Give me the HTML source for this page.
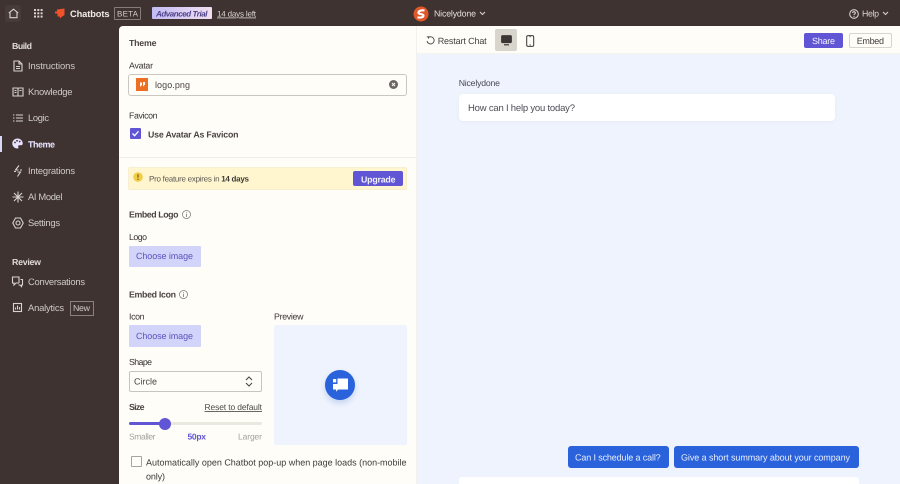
<!DOCTYPE html>
<html><head><meta charset="utf-8"><style>
html,body{margin:0;padding:0;width:900px;height:484px;overflow:hidden;background:#3e3331}
*{box-sizing:border-box}
body{font-family:"Liberation Sans",sans-serif;position:relative}
.a{position:absolute}
svg{position:absolute;overflow:visible}
.s{fill:none;stroke:#d8d3cd;stroke-width:1.1}
#tx{left:0;top:0;z-index:5;text-rendering:geometricPrecision}
#tx text{font-family:"Liberation Sans",sans-serif;font-size:9px;fill:#3a3433}
.n{fill:#cfcac4 !important;font-size:9.400px !important}
.b{font-weight:700}
.l{font-size:8.800px !important}
#tx .h{fill:#4a4342;font-size:8.800px}
</style></head><body>
<!-- top bar -->
<div class="a" style="left:5px;top:5px;width:16px;height:17px;background:#463b39;border-radius:3px"></div>
<svg style="left:8px;top:8px" width="11" height="11" viewBox="0 0 11 11"><path class="s" d="M.8 5L5.500 1.200 10.200 5M2 4.300V9.700H9V4.300"/></svg>
<svg style="left:34px;top:9px" width="9" height="9" viewBox="0 0 9 9" fill="#d8d3cd"><rect x="0" y="0" width="2" height="2"/><rect x="3.300" y="0" width="2" height="2"/><rect x="6.600" y="0" width="2" height="2"/><rect x="0" y="3.300" width="2" height="2"/><rect x="3.300" y="3.300" width="2" height="2"/><rect x="6.600" y="3.300" width="2" height="2"/><rect x="0" y="6.600" width="2" height="2"/><rect x="3.300" y="6.600" width="2" height="2"/><rect x="6.600" y="6.600" width="2" height="2"/></svg>
<svg style="left:54px;top:8px" width="11" height="11" viewBox="0 0 11 11" fill="#f0522a"><path d="M3 1.500L10.500 .5V7L7.500 9 6.500 10.500 5.500 8.500H3.500V5.500H1V3.500H3Z"/></svg>
<div class="a" style="left:114px;top:7px;width:27px;height:13px;border:1px solid #857b77;border-radius:1px"></div>
<div class="a" style="left:152px;top:7px;width:60px;height:12px;background:linear-gradient(90deg,#c3bcf5,#f1dff0);border-radius:1px"></div>
<svg style="left:413px;top:5.500px" width="16" height="16" viewBox="0 0 16 16"><circle cx="8" cy="8" r="7.500" fill="#e0572a"/><path d="M11.500 4.500C8.500 3.800 5 5 5.500 7 6 8.500 10.500 7.800 10.500 9.500 10.500 11.500 7 12 4.500 11.300" fill="none" stroke="#fff" stroke-width="2.100"/></svg>
<svg style="left:479px;top:11px" width="7" height="5" viewBox="0 0 7 5"><path class="s" d="M1 1L3.500 3.500 6 1" stroke-width=".8"/></svg>
<svg style="left:849px;top:8.500px" width="10" height="10" viewBox="0 0 10 10"><circle class="s" cx="5" cy="5" r="4.300"/><path class="s" d="M3.600 4C3.700 2.300 6.500 2.300 6.400 4 6.300 5 5 5 5 6"/><circle cx="5" cy="7.400" r=".6" fill="#d8d3cd"/></svg>
<svg style="left:882px;top:11px" width="7" height="5" viewBox="0 0 7 5"><path class="s" d="M1 1L3.500 3.500 6 1" stroke-width=".8"/></svg>

<!-- sidebar icons -->
<svg style="left:13px;top:60px" width="10" height="12" viewBox="0 0 10 12"><path class="s" d="M1 1H6L9 4V11H1ZM6 1V4H9M3 6.500H7M3 8.500H7"/></svg>
<svg style="left:12px;top:87px" width="12" height="10" viewBox="0 0 12 10"><path class="s" d="M1 1H5C5.500 1 6 1.400 6 2 6 1.400 6.500 1 7 1H11V9H1ZM6 2V9M2.500 3.500H4.500M2.500 5.500H4.500M7.500 3.500H9.500"/></svg>
<svg style="left:13px;top:114px" width="10" height="8" viewBox="0 0 10 8"><path class="s" d="M0 1H1.500M3 1H10M0 4H1.500M3 4H10M0 7H1.500M3 7H10"/></svg>
<div class="a" style="left:0;top:136px;width:2px;height:16px;background:#d9d9f5"></div>
<svg style="left:12px;top:138px" width="11" height="11" viewBox="0 0 11 11"><path fill="#e6e2ff" d="M5.500.5C2.500.5.300 2.700.300 5.500S2.500 10.500 5.500 10.500C6.500 10.500 6.700 9.800 6.300 9.200 5.800 8.300 6.300 7.300 7.400 7.300H9C10 7.300 10.700 6.600 10.700 5.500 10.700 2.700 8.500.5 5.500.5Z"/><circle cx="3" cy="4.500" r=".9" fill="#3e3331"/><circle cx="5" cy="2.800" r=".9" fill="#3e3331"/><circle cx="7.700" cy="3.500" r=".9" fill="#3e3331"/></svg>
<svg style="left:13px;top:165px" width="10" height="12" viewBox="0 0 10 12"><path class="s" d="M6 .500L2.500 5H5.500M4.500 11.500L7.500 7H4.500M1 6.500H3M7 5H9"/></svg>
<svg style="left:12px;top:191px" width="12" height="12" viewBox="0 0 12 12"><path class="s" d="M6 .500V11.500M.5 6H11.500M2 2L10 10M10 2L2 10"/></svg>
<svg style="left:12px;top:217px" width="12" height="12" viewBox="0 0 12 12"><path class="s" d="M3.500 1H8.500L11.200 6 8.500 11H3.500L.8 6Z"/><circle class="s" cx="6" cy="6" r="2"/></svg>
<svg style="left:12px;top:276px" width="11" height="11" viewBox="0 0 11 11"><path class="s" d="M7 7V1H.5V7H2V9L4 7H7M8.500 3.500H10.500V9H9.500V10.500L8 9H6.500"/></svg>
<svg style="left:13px;top:303px" width="9" height="9" viewBox="0 0 9 9"><rect class="s" x=".5" y=".5" width="8" height="8"/><path class="s" d="M2.500 6.500V4.500M4.500 6.500V2.500M6.500 6.500V4"/></svg>
<div class="a" style="left:70px;top:301px;width:24px;height:15px;border:1px solid #8b817c"></div>

<!-- left panel -->
<div class="a" style="left:119px;top:26px;width:297px;height:458px;background:#fffdf8;border-radius:4px 0 0 0"></div>
<div class="a" style="left:128px;top:74px;width:279px;height:22px;background:#fffdf8;border:1px solid #cbc7c0;border-radius:3px"></div>
<div class="a" style="left:136px;top:78px;width:12px;height:13px;background:#ed6f24"></div>
<svg style="left:139px;top:81px" width="7" height="7" viewBox="0 0 7 7" fill="#fff"><path d="M1 1.500H3V4L1 6ZM4 1H6V3.500L4 5.500Z"/></svg>
<svg style="left:388.500px;top:80px" width="9" height="9" viewBox="0 0 9 9"><circle cx="4.500" cy="4.500" r="4.500" fill="#6c6765"/><path d="M3 3L6 6M6 3L3 6" stroke="#fffdf8" stroke-width="1"/></svg>
<div class="a" style="left:130px;top:128px;width:11px;height:11px;background:#6055d4;border-radius:1px"></div>
<svg style="left:130px;top:128px" width="11" height="11" viewBox="0 0 11 11"><path d="M2.500 5.500L4.600 7.700 8.500 3.300" fill="none" stroke="#fff" stroke-width="1.300"/></svg>
<div class="a" style="left:119px;top:157px;width:297px;height:1px;background:#f1eee8"></div>
<div class="a" style="left:128px;top:167px;width:279px;height:23px;background:#fff6cf;border:1px solid #f7efd0;border-radius:2px"></div>
<svg style="left:133px;top:172px" width="10" height="10" viewBox="0 0 10 10"><circle cx="5" cy="5" r="4.800" fill="#f0cd45"/><path d="M5 2.300V5.500" stroke="#6b5a1c" stroke-width="1.200"/><circle cx="5" cy="7.200" r=".7" fill="#6b5a1c"/></svg>
<div class="a" style="left:353px;top:171px;width:50px;height:15px;background:#6055d4;border-radius:2px"></div>
<svg style="left:182px;top:210px" width="9" height="9" viewBox="0 0 9 9"><circle cx="4.500" cy="4.500" r="4" fill="none" stroke="#77726e" stroke-width=".7"/><path d="M4.500 4V7M4.500 2.200V3.200" stroke="#77726e" stroke-width=".8"/></svg>
<div class="a" style="left:128.500px;top:245.500px;width:72px;height:21.500px;background:#d2d4f9;border-radius:1px"></div>
<svg style="left:179px;top:290px" width="9" height="9" viewBox="0 0 9 9"><circle cx="4.500" cy="4.500" r="4" fill="none" stroke="#77726e" stroke-width=".7"/><path d="M4.500 4V7M4.500 2.200V3.200" stroke="#77726e" stroke-width=".8"/></svg>
<div class="a" style="left:128.500px;top:325px;width:72px;height:21.500px;background:#d2d4f9;border-radius:1px"></div>
<div class="a" style="left:273.500px;top:325px;width:133.500px;height:120px;background:#eef3fd;border-radius:2px"></div>
<div class="a" style="left:325px;top:370px;width:30px;height:30px;background:#2a62dc;border-radius:50%;box-shadow:0 3px 6px rgba(40,90,200,.22)"></div>
<svg style="left:331px;top:376px" width="18" height="18" viewBox="0 0 18 18" fill="#fff"><path d="M6.500 2.500H17V13.500H7L5.200 15.800 5 13.500H2V8H6.500Z"/><rect x="2" y="3" width="3.200" height="3.400"/></svg>
<div class="a" style="left:128.500px;top:371px;width:133.500px;height:21px;background:#fffdf8;border:1px solid #c9c5be;border-radius:2px"></div>
<svg style="left:245px;top:376px" width="8" height="11" viewBox="0 0 8 11"><path d="M1 4L4 1 7 4M1 7L4 10 7 7" fill="none" stroke="#47423f" stroke-width="1"/></svg>
<div class="a" style="left:128.500px;top:422px;width:133.500px;height:3px;background:#ebe8e0;border-radius:2px"></div>
<div class="a" style="left:128.500px;top:422px;width:36px;height:3px;background:#6055d4;border-radius:2px"></div>
<div class="a" style="left:159px;top:418px;width:12px;height:12px;background:#6055d4;border-radius:50%"></div>
<div class="a" style="left:131px;top:456px;width:10.500px;height:11px;border:1px solid #a8a49e;border-radius:1px;background:#fffdf8"></div>

<!-- right panel -->
<div class="a" style="left:416px;top:26px;width:484px;height:458px;background:#eff3fd"></div>
<div class="a" style="left:416px;top:26px;width:1px;height:458px;background:#f3f1ee"></div>
<div class="a" style="left:417px;top:26px;width:483px;height:28px;background:#fffdf8;border-bottom:1px solid #f5f3ee"></div>
<svg style="left:426px;top:36px" width="9" height="9" viewBox="0 0 9 9"><path d="M2 1.800A3.600 3.600 0 1 1 1 5" fill="none" stroke="#4a4543" stroke-width=".9"/><path d="M.8 .8H2.600V2.600" fill="none" stroke="#4a4543" stroke-width=".8"/></svg>
<div class="a" style="left:495px;top:29px;width:22px;height:22px;background:#d8d5cc;border-radius:2px"></div>
<svg style="left:500.500px;top:35px" width="11" height="11" viewBox="0 0 11 11"><rect x=".6" y=".6" width="9.800" height="7" rx="1" fill="#3b3634" stroke="#3b3634"/><path d="M3 9.800H8" stroke="#3b3634" stroke-width="1.200"/></svg>
<svg style="left:525.500px;top:34.500px" width="9" height="12" viewBox="0 0 9 12"><rect x=".7" y=".6" width="7" height="10.800" rx="1.400" fill="none" stroke="#3b3634" stroke-width="1"/><path d="M3.200 1.800H5.200M3.500 10H5" stroke="#3b3634" stroke-width=".7"/></svg>
<div class="a" style="left:804px;top:33px;width:39px;height:15px;background:#6055d4;border-radius:2px"></div>
<div class="a" style="left:848.500px;top:33px;width:43px;height:15px;background:#fffdf8;border:1px solid #d9d5ce;border-radius:2px"></div>
<div class="a" style="left:458.500px;top:94px;width:376px;height:27px;background:#fff;border-radius:4px;box-shadow:0 1px 3px rgba(80,100,160,.06)"></div>
<div class="a" style="left:567.500px;top:445.500px;width:101px;height:22.500px;background:#2a62dc;border-radius:3px"></div>
<div class="a" style="left:673.500px;top:445.500px;width:185px;height:22.500px;background:#2a62dc;border-radius:3px"></div>
<div class="a" style="left:458.500px;top:477px;width:400px;height:7px;background:#fff;border-radius:3px 3px 0 0"></div>

<!-- all text -->
<svg id="tx" width="900" height="484" viewBox="0 0 900 484">
<text x="70" y="17" textLength="39.500" class="b" style="fill:#eeeae5;font-size:9.300px">Chatbots</text>
<text x="117" y="16.700" textLength="21" style="fill:#cfcac5;font-size:8px">BETA</text>
<text x="156" y="16.500" textLength="51.500" class="b" style="fill:#4a3f88;font-size:8px;font-style:italic">Advanced Trial</text>
<text x="217" y="16.500" textLength="39" style="fill:#dcd7d2;font-size:8px;text-decoration:underline">14 days left</text>
<text x="434" y="16.700" textLength="42" style="fill:#e4dfda;font-size:8.800px">Nicelydone</text>
<text x="862" y="16.700" textLength="17" style="fill:#d8d3cd;font-size:8.800px">Help</text>

<text x="12" y="49" textLength="20" class="b" style="fill:#e0dbd6;font-size:8.800px">Build</text>
<text x="28" y="69" textLength="47" class="n">Instructions</text>
<text x="28" y="95" textLength="44.500" class="n">Knowledge</text>
<text x="28" y="121" textLength="21" class="n">Logic</text>
<text x="28" y="147.500" textLength="27" class="b" style="fill:#e8e4ff;font-size:9px">Theme</text>
<text x="28" y="174" textLength="47" class="n">Integrations</text>
<text x="28" y="200" textLength="34.500" class="n">AI Model</text>
<text x="28" y="226" textLength="32" class="n">Settings</text>
<text x="12" y="265" textLength="29" class="b" style="fill:#e0dbd6;font-size:8.800px">Review</text>
<text x="28" y="285" textLength="57" class="n">Conversations</text>
<text x="28" y="311" textLength="36" class="n">Analytics</text>
<text x="73" y="311" textLength="17" style="fill:#cfcac4;font-size:8.800px">New</text>

<text x="129" y="46" textLength="27.500" class="b h">Theme</text>
<text x="129" y="68.300" textLength="24" class="l">Avatar</text>
<text x="155" y="88" textLength="35" style="fill:#4a4443">logo.png</text>
<text x="129" y="118.500" textLength="28.500" class="l">Favicon</text>
<text x="148" y="137.500" textLength="90.500" class="b h">Use Avatar As Favicon</text>
<text x="149" y="181.300" textLength="100" style="fill:#5d5853;font-size:8px">Pro feature expires in <tspan class="b" style="fill:#3f3a38">14 days</tspan></text>
<text x="361" y="182.500" textLength="34.500" class="b" style="fill:#f2f0fd;font-size:8.800px">Upgrade</text>
<text x="129" y="217.700" textLength="49.500" class="b h">Embed Logo</text>
<text x="129" y="240" textLength="18" class="l">Logo</text>
<text x="136" y="259" textLength="57" style="fill:#5c52bf">Choose image</text>
<text x="129" y="297.700" textLength="47" class="b h">Embed Icon</text>
<text x="129" y="319.500" textLength="15.500" class="l">Icon</text>
<text x="274" y="319.500" textLength="29.500" class="l">Preview</text>
<text x="136" y="339" textLength="57" style="fill:#5c52bf">Choose image</text>
<text x="129" y="365" textLength="23" class="l">Shape</text>
<text x="134" y="384.500" textLength="23" style="fill:#4a4443">Circle</text>
<text x="129" y="410" textLength="15.500" class="b h">Size</text>
<text x="204.500" y="410" textLength="57.500" style="fill:#4f4a47;font-size:8.500px;text-decoration:underline">Reset to default</text>
<text x="129" y="439.300" textLength="26.500" style="fill:#a5a19b;font-size:8.500px">Smaller</text>
<text x="187.500" y="439.300" textLength="18.500" class="b" style="fill:#6055d4;font-size:8.500px">50px</text>
<text x="238" y="439.300" textLength="24" style="fill:#a5a19b;font-size:8.500px">Larger</text>
<text x="146" y="465.300" textLength="260.500" style="fill:#3f3a38">Automatically open Chatbot pop-up when page loads (non-mobile</text>
<text x="146" y="479.500" textLength="19" style="fill:#3f3a38">only)</text>

<text x="437.700" y="44" textLength="49" style="fill:#45403e">Restart Chat</text>
<text x="812" y="44" textLength="23" style="fill:#f2f0fd">Share</text>
<text x="856.700" y="44" textLength="27.300" style="fill:#45403e">Embed</text>
<text x="458.700" y="86" textLength="41.300" style="fill:#4a4a55;font-size:8.700px">Nicelydone</text>
<text x="468" y="111" textLength="107" style="fill:#4c4c55;font-size:9.500px">How can I help you today?</text>
<text x="575" y="460.300" textLength="85.700" style="fill:#e8eefc">Can I schedule a call?</text>
<text x="681" y="460.300" textLength="169" style="fill:#e8eefc">Give a short summary about your company</text>
</svg>
</body></html>
